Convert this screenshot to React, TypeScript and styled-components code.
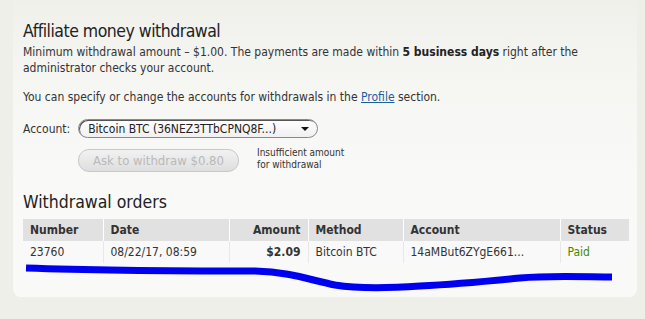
import styled, { createGlobalStyle } from 'styled-components'

const Global = createGlobalStyle`
  html, body {
    margin: 0;
    padding: 0;
    background: #efefe9;
  }
  body {
    font-family: Tahoma, "DejaVu Sans Condensed", "DejaVu Sans", Verdana, sans-serif;
    font-stretch: condensed;
    color: #333;
  }
`

const Page = styled.div`
  width: 645px;
  height: 319px;
  overflow: hidden;
  padding: 0 8px 0 13px;
  box-sizing: border-box;
`

const Panel = styled.div`
  position: relative;
  width: 624px;
  height: 297px;
  box-sizing: border-box;
  padding: 18px 10px 0 10px;
  background: linear-gradient(to bottom, #f0f0eb 0px, #f6f6f3 90px, #f9f9f8 180px);
  border-radius: 0 0 8px 8px;
`

const Title = styled.h1`
  margin: 0;
  font-size: 17.5px;
  letter-spacing: -0.5px;
  font-weight: normal;
  color: #222;
  line-height: 26px;
`

const Text = styled.p<{ $gap?: number }>`
  margin: 0 0 ${(p) => p.$gap ?? 14}px;
  font-size: 12px;
  line-height: 16px;
  color: #333;

  b {
    color: #222;
  }

  a {
    color: #1a5fa0;
    text-decoration: underline;
  }
`

const AccountRow = styled.div`
  display: flex;
  align-items: center;
  gap: 8px;
  margin-top: 4px;
  font-size: 12px;
`

const SelectBox = styled.div`
  width: 240px;
  height: 19px;
  box-sizing: border-box;
  display: flex;
  align-items: center;
  justify-content: space-between;
  padding: 0 8px 0 9px;
  border: 1px solid #888;
  border-radius: 10px;
  background: linear-gradient(to bottom, #ffffff, #f0f0f0);
  box-shadow: inset 1px 1px 0 #555;
  font-size: 12px;
  color: #222;
`

const Caret = styled.span`
  width: 0;
  height: 0;
  border-left: 4px solid transparent;
  border-right: 4px solid transparent;
  border-top: 4px solid #111;
`

const ActionRow = styled.div`
  display: flex;
  align-items: center;
  gap: 18px;
  margin: 11px 0 0 55px;
`

const Button = styled.button`
  width: 161px;
  height: 23px;
  border: 1px solid #c8c8c8;
  border-radius: 11px;
  background: linear-gradient(to bottom, #f2f2f2, #dedede);
  color: #b9b9b9;
  font-family: inherit;
  font-stretch: inherit;
  font-size: 13px;
  padding: 0;
`

const Note = styled.div`
  font-size: 10px;
  line-height: 12px;
  color: #333;
  margin-top: -4px;
`

const SubTitle = styled.h2`
  margin: 19px 0 6px;
  font-size: 17.5px;
  font-weight: normal;
  color: #222;
  line-height: 22px;
`

const Table = styled.table`
  width: 606px;
  border-collapse: collapse;
  font-size: 12px;
`

const Th = styled.th<{ $right?: boolean; $w: number }>`
  background: #e1e1e1;
  height: 22px;
  padding: 0 7px;
  width: ${(p) => p.$w}px;
  box-sizing: border-box;
  text-align: ${(p) => (p.$right ? 'right' : 'left')};
  font-weight: bold;
  color: #333;
  border-left: 1px solid #fff;

  &:first-child {
    border-left: none;
  }
`

const Td = styled.td<{ $right?: boolean; $bold?: boolean; $paid?: boolean }>`
  height: 22px;
  padding: 0 7px;
  text-align: ${(p) => (p.$right ? 'right' : 'left')};
  font-weight: ${(p) => (p.$bold ? 'bold' : 'normal')};
  color: ${(p) => (p.$paid ? '#3c8c00' : '#333')};
  background: #f9f9f9;
  border-left: 1px solid #e8e8e8;

  &:first-child {
    border-left: none;
  }
`

const Scribble = styled.svg`
  position: absolute;
  left: -13px;
  top: 0;
  pointer-events: none;
`

export default function App() {
  return (
    <Page>
      <Global />
      <Panel>
        <Title>Affiliate money withdrawal</Title>
        <Text $gap={13}>
          Minimum withdrawal amount – $1.00. The payments are made within <b>5 business days</b> right after the
          administrator checks your account.
        </Text>
        <Text>
          You can specify or change the accounts for withdrawals in the <a href="#">Profile</a> section.
        </Text>
        <AccountRow>
          <span>Account:</span>
          <SelectBox>
            <span>Bitcoin BTC (36NEZ3TTbCPNQ8F...)</span>
            <Caret />
          </SelectBox>
        </AccountRow>
        <ActionRow>
          <Button disabled>Ask to withdraw $0.80</Button>
          <Note>
            Insufficient amount
            <br />
            for withdrawal
          </Note>
        </ActionRow>
        <SubTitle>Withdrawal orders</SubTitle>
        <Table>
          <thead>
            <tr>
              <Th $w={80}>Number</Th>
              <Th $w={126}>Date</Th>
              <Th $w={79} $right>
                Amount
              </Th>
              <Th $w={95}>Method</Th>
              <Th $w={157}>Account</Th>
              <Th $w={69}>Status</Th>
            </tr>
          </thead>
          <tbody>
            <tr>
              <Td>23760</Td>
              <Td>08/22/17, 08:59</Td>
              <Td $right $bold>
                $2.09
              </Td>
              <Td>Bitcoin BTC</Td>
              <Td>14aMBut6ZYgE661...</Td>
              <Td $paid>Paid</Td>
            </tr>
          </tbody>
        </Table>
        <Scribble width="645" height="319" viewBox="0 0 645 319">
          <path
            d="M26 268 C 80 270, 200 271, 255 271 C 290 272, 310 280, 335 285 C 360 289, 390 288, 420 286 C 460 284, 490 281, 520 278 C 550 275, 590 277, 612 277"
            fill="none"
            stroke="#0000f0"
            strokeWidth="7"
            strokeLinecap="butt"
          />
        </Scribble>
      </Panel>
    </Page>
  )
}
